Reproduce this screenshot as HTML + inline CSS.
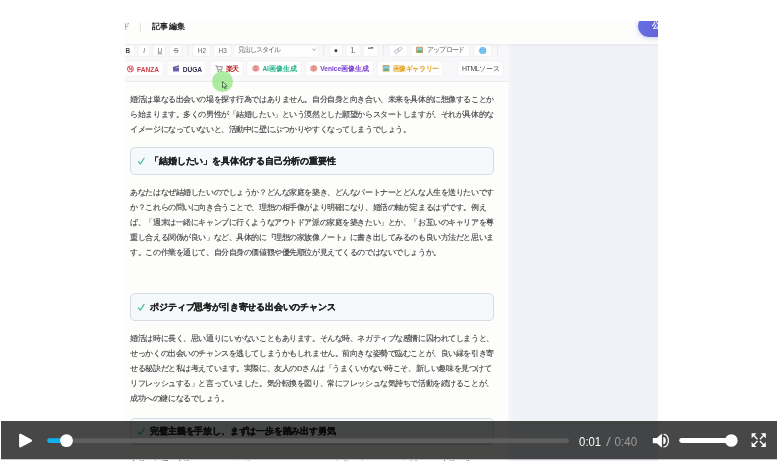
<!DOCTYPE html>
<html lang="ja">
<head>
<meta charset="utf-8">
<title>記事編集</title>
<style>
html,body{margin:0;padding:0;}
body{width:777px;height:461px;overflow:hidden;background:#fff;position:relative;font-family:"Liberation Sans",sans-serif;}
.abs{position:absolute;}
#frame{position:absolute;left:125.2px;top:20.8px;width:532.8px;height:440.2px;overflow:hidden;background:#fdfdfc;filter:blur(0.45px);}
/* coordinates inside frame are page coords minus (125,20.5) via wrapper */
#fw{position:absolute;left:-125.2px;top:-20.8px;width:777px;height:461px;}
#hdr{left:125px;top:20.5px;width:533px;height:23.2px;background:#fdfdfc;box-shadow:0 1px 3px rgba(0,0,0,0.06);z-index:3;}
#gray{left:507.5px;top:43.5px;width:151px;height:418px;background:linear-gradient(90deg,#f7f7fa 0,#f1f2f7 5px);}
#tb{left:125px;top:43.5px;width:383px;height:37.5px;background:#f8f8fa;border-bottom:1px solid #ececf0;}
.hbox{position:absolute;left:130.3px;width:363.7px;height:27.2px;box-sizing:border-box;border:1px solid #d6dce3;border-radius:5px;background:#f5f9fb;}
svg text{font-family:"Liberation Sans",sans-serif;dominant-baseline:central;}
.bb rect{fill:#fefefe;stroke:#ececf0;stroke-width:0.6;}
.sp rect{fill:#e9eaee;}
.t1 text{font-size:6.4px;fill:#666;}
.t2 text{font-size:6.6px;font-weight:bold;}
svg .tm text{font-size:13px;dominant-baseline:alphabetic;}
.bt text{font-size:7.58px;fill:#3c3c3c;stroke:#3c3c3c;stroke-width:0.1px;}
.ht text{font-size:8.83px;font-weight:bold;fill:#222;stroke:#222;stroke-width:0.22px;}
.ck path{fill:none;stroke:#3dbd9a;stroke-width:1.15;stroke-linecap:round;stroke-linejoin:round;}
</style>
</head>
<body>
<div id="frame"><div id="fw">
  <div class="abs" id="gray"></div>
  <div class="abs" id="tb"></div>
  <div class="abs" id="hdr"></div>
  <svg class="abs" style="left:0;top:0;z-index:4;" width="777" height="461" viewBox="0 0 777 461">
    <text x="122" y="26.5" textLength="7.8" style="font-size:7.8px;fill:#777;">ド</text>
    <rect x="139.8" y="23.2" width="1" height="8.2" fill="#dcdcdc"/>
    <text x="151.7" y="26.4" textLength="33.3" style="font-size:8.3px;font-weight:bold;fill:#222;">記事編集</text>
  </svg>
  <div class="abs" style="left:638px;top:14.6px;width:44px;height:22.4px;border-radius:11.2px;background:linear-gradient(120deg,#6173e6 0%,#6a56c6 100%);z-index:4;box-shadow:0 1px 5px rgba(100,100,220,0.35);"></div>
  <svg class="abs" style="left:0;top:0;z-index:5;" width="777" height="461" viewBox="0 0 777 461"><text x="652.3" y="25.9" textLength="7.6" style="font-size:7.6px;font-weight:bold;fill:#fff;">公</text></svg>

  <!-- toolbar -->
  <svg class="abs" style="left:0;top:0;" width="777" height="461" viewBox="0 0 777 461">
   <g class="bb">
    <rect x="120" y="44.5" width="14.8" height="12" rx="2.5"/>
    <rect x="138" y="44.5" width="12.2" height="12" rx="2.5"/>
    <rect x="152.8" y="44.5" width="12.9" height="12" rx="2.5"/>
    <rect x="169.5" y="44.5" width="12.3" height="12" rx="2.5"/>
    <rect x="192.7" y="44.5" width="18.0" height="12" rx="2.5"/>
    <rect x="213.8" y="44.5" width="17.5" height="12" rx="2.5"/>
    <rect x="329.6" y="44.5" width="13.0" height="12" rx="2.5"/>
    <rect x="345.8" y="44.5" width="14.6" height="12" rx="2.5"/>
    <rect x="363.4" y="44.5" width="14.6" height="12" rx="2.5"/>
    <rect x="388.9" y="44.5" width="18.5" height="12" rx="2.5"/>
    <rect x="410.7" y="44.5" width="59.0" height="12" rx="2.5"/>
    <rect x="473.9" y="44.5" width="17.8" height="12" rx="2.5"/>
    <rect x="234" y="44.5" width="84.4" height="12.8" rx="2.5"/>
    <rect x="118" y="61" width="45.4" height="15.2" rx="2.5"/>
    <rect x="167" y="61" width="39.0" height="15.2" rx="2.5"/>
    <rect x="210.1" y="61" width="33.0" height="15.2" rx="2.5"/>
    <rect x="246.9" y="61" width="54.4" height="15.2" rx="2.5"/>
    <rect x="305.3" y="61" width="68.2" height="15.2" rx="2.5"/>
    <rect x="376.9" y="61" width="66.1" height="15.2" rx="2.5"/>
    <rect x="457.7" y="61" width="45.6" height="15.2" rx="2.5"/>
   </g>
   <g class="sp">
    <rect x="187.1" y="45" width="1.2" height="10.5"/>
    <rect x="323.0" y="45" width="1.2" height="10.5"/>
    <rect x="382.9" y="45" width="1.2" height="10.5"/>
    <rect x="496.9" y="45" width="1.2" height="10.5"/>
   </g>
   <g class="t1">
    <text x="125.6" y="50.5" style="font-weight:bold;fill:#444;">B</text>
    <text x="143.3" y="50.5" style="font-style:italic;">I</text>
    <text x="157.6" y="50.5">U</text>
    <rect x="157.4" y="53.6" width="5" height="0.6" fill="#666"/>
    <text x="173.9" y="50.5">S</text>
    <rect x="173.2" y="50.2" width="5.6" height="0.6" fill="#666"/>
    <text x="197.8" y="50.5" textLength="8.2">H2</text>
    <text x="218.6" y="50.5" textLength="8.2">H3</text>
    <text x="238.2" y="49.9" textLength="42.6" style="font-size:6.7px;fill:#666;">見出しスタイル</text>
    <path d="M312.5 48.9 l1.6 1.5 l1.6 -1.5" fill="none" stroke="#777" stroke-width="0.75"/>
    <circle cx="335.9" cy="50.8" r="1.45" fill="#333"/>
    <text x="350.3" y="50.5" textLength="5.4" style="font-family:'Liberation Serif',serif;fill:#3a3a3a;font-size:7.6px;">1.</text>
    <text x="367.8" y="49.8" textLength="6" style="font-weight:bold;fill:#555;font-size:7px;">&#8220;&#8221;</text>
    <g fill="none" stroke="#b3b5c2" stroke-width="0.9" stroke-linecap="round"><rect x="394.4" y="49.9" width="4.6" height="2.7" rx="1.35" transform="rotate(-40 396.7 51.2)"/><rect x="397.4" y="47.9" width="4.6" height="2.7" rx="1.35" transform="rotate(-40 399.7 49.2)"/></g>
    <g><rect x="416" y="46.8" width="7" height="6.2" rx="0.6" fill="#c9a15a"/><rect x="416.8" y="47.6" width="5.4" height="4.6" fill="#8fc7e8"/><path d="M416.8 52.2 l1.9 -2.5 l1.3 1.4 l1 -1 l1.2 2.1 z" fill="#5aa85a"/></g>
    <text x="426.9" y="49.8" textLength="38.3" style="font-size:7px;fill:#606060;">アップロード</text>
    <g><circle cx="482.7" cy="50.4" r="3.5" fill="#4fb0e8"/><path d="M479.2 50.4 h7 M482.7 46.9 v7 M480.2 48.3 q2.5 1 5 0 M480.2 52.5 q2.5 -1 5 0" fill="none" stroke="#9ad4f5" stroke-width="0.5"/><ellipse cx="482.7" cy="50.4" rx="1.6" ry="3.5" fill="none" stroke="#9ad4f5" stroke-width="0.5"/></g>
   </g>
   <g class="t2">
    <g fill="none" stroke="#d8434d" stroke-width="0.9"><circle cx="130.4" cy="68.9" r="3"/><path d="M128.3 66.8 l4.2 4.2"/></g>
    <text x="130.4" y="69.1" text-anchor="middle" style="font-size:3.6px;fill:#d8434d;">18</text>
    <text x="137" y="69" textLength="22" fill="#d63b45">FANZA</text>
    <g><rect x="173" y="67.6" width="6" height="4" rx="0.5" fill="#6c5fb5"/><path d="M172.9 67 l5.9 -1.7 l0.4 1.3 l-5.9 1.7 z" fill="#4b4380"/><path d="M174.3 66.2 l0.8 1.2 M176.2 65.7 l0.8 1.2" stroke="#d8d4f0" stroke-width="0.5"/></g>
    <text x="182.8" y="69" textLength="19.3" fill="#2b2e4a">DUGA</text>
    <g fill="none" stroke="#8c8c8c" stroke-width="0.95" stroke-linejoin="round"><path d="M215.4 65.7 h1.3 l0.9 4 h4 l0.8 -3 h-5.4"/><circle cx="218.3" cy="71.2" r="0.5" fill="#9a9a9a"/><circle cx="221" cy="71.2" r="0.5" fill="#9a9a9a"/></g>
    <text x="225.8" y="68.9" textLength="13.2" fill="#b81c1c">楽天</text>
    <g><ellipse cx="255.8" cy="68.4" rx="3.3" ry="2.9" fill="#f0a9a4"/><path d="M255.8 65.6 v5.6 M253.8 67 q1 0.8 2 0 M257.8 67 q-1 0.8 -2 0 M253.60000000000002 69.3 q1.1 0.7 2.2 0 M258.0 69.3 q-1.1 0.7 -2.2 0" fill="none" stroke="#c96a6a" stroke-width="0.5"/><ellipse cx="255.8" cy="68.4" rx="3.3" ry="2.9" fill="none" stroke="#d98080" stroke-width="0.5"/></g>
    <text x="262.4" y="68.9" textLength="34.4" fill="#22b487">AI画像生成</text>
    <g><ellipse cx="313.7" cy="68.4" rx="3.3" ry="2.9" fill="#f0a9a4"/><path d="M313.7 65.6 v5.6 M311.7 67 q1 0.8 2 0 M315.7 67 q-1 0.8 -2 0 M311.5 69.3 q1.1 0.7 2.2 0 M315.9 69.3 q-1.1 0.7 -2.2 0" fill="none" stroke="#c96a6a" stroke-width="0.5"/><ellipse cx="313.7" cy="68.4" rx="3.3" ry="2.9" fill="none" stroke="#d98080" stroke-width="0.5"/></g>
    <text x="320.3" y="68.9" textLength="48.6" fill="#7a3fd2">Venice画像生成</text>
    <g><rect x="382.7" y="65.1" width="6.8" height="6.4" rx="0.6" fill="#c9a15a"/><rect x="383.5" y="65.9" width="5.2" height="4.8" fill="#8fc7e8"/><path d="M383.5 70.7 l1.8 -2.6 l1.3 1.4 l1 -1 l1.1 2.2 z" fill="#5aa85a"/></g>
    <text x="392.8" y="68.9" textLength="46.3" fill="#e3a321">画像ギャラリー</text>
    <text x="462" y="68.7" textLength="37.5" style="font-weight:normal;fill:#444;font-size:6.9px;">HTMLソース</text>
   </g>
  </svg>

  <!-- cursor highlight -->
  <div class="abs" style="left:212px;top:71.1px;width:21.2px;height:21.2px;border-radius:50%;background:rgba(140,230,125,0.72);z-index:6;"></div>
  <svg class="abs" style="left:222px;top:81px;z-index:7;" width="6" height="8.5" viewBox="0 0 12 17"><path d="M1 1 L1 13.5 L4 10.8 L6.3 16 L8.3 15 L6 10.2 L10.3 10.2 Z" fill="rgba(255,255,255,0.35)" stroke="#3c5c3c" stroke-width="1.6" stroke-linejoin="round"/></svg>

  <!-- body text -->
  <div class="hbox" style="top:147.4px;"></div>
  <div class="hbox" style="top:293.4px;"></div>
  <div class="hbox" style="top:417.9px;"></div>
  <svg class="abs" style="left:0;top:0;" width="777" height="461" viewBox="0 0 777 461">
   <g class="bt">
    <text x="130.3" y="99.2" textLength="363.8">婚活は単なる出会いの場を探す行為ではありません。自分自身と向き合い、未来を具体的に想像することか</text>
    <text x="130.3" y="114.2" textLength="363.8">ら始まります。多くの男性が「結婚したい」という漠然とした願望からスタートしますが、それが具体的な</text>
    <text x="130.3" y="129.3" textLength="280.5">イメージになっていないと、活動中に壁にぶつかりやすくなってしまうでしょう。</text>
    <text x="130.3" y="192.6" textLength="363.8">あなたはなぜ結婚したいのでしょうか？どんな家庭を築き、どんなパートナーとどんな人生を送りたいです</text>
    <text x="130.3" y="207.7" textLength="356.3">か？これらの問いに向き合うことで、理想の相手像がより明確になり、婚活の軸が定まるはずです。例え</text>
    <text x="130.3" y="222.7" textLength="363.8">ば、「週末は一緒にキャンプに行くようなアウトドア派の家庭を築きたい」とか、「お互いのキャリアを尊</text>
    <text x="130.3" y="237.8" textLength="363.8">重し合える関係が良い」など、具体的に『理想の家族像ノート』に書き出してみるのも良い方法だと思いま</text>
    <text x="130.3" y="252.8" textLength="310.8">す。この作業を通じて、自分自身の価値観や優先順位が見えてくるのではないでしょうか。</text>
    <text x="130.3" y="338.7" textLength="363.8">婚活は時に長く、思い通りにいかないこともあります。そんな時、ネガティブな感情に囚われてしまうと、</text>
    <text x="130.3" y="353.8" textLength="363.8">せっかくの出会いのチャンスを逃してしまうかもしれません。前向きな姿勢で臨むことが、良い縁を引き寄</text>
    <text x="130.3" y="368.8" textLength="361.5">せる秘訣だと私は考えています。実際に、友人のDさんは「うまくいかない時こそ、新しい趣味を見つけて</text>
    <text x="130.3" y="383.9" textLength="363.8">リフレッシュする」と言っていました。気分転換を図り、常にフレッシュな気持ちで活動を続けることが、</text>
    <text x="130.3" y="398.9" textLength="98.5">成功への鍵になるでしょう。</text>
    <text x="130.3" y="464.2" textLength="356.3">完璧な相手、完璧なタイミングを待っていては、いつまでも行動に移せません。婚活では、完璧を求めす</text>
   </g>
   <g class="ht">
    <text x="150.3" y="160.7" textLength="185.4">「結婚したい」を具体化する自己分析の重要性</text>
    <text x="150.3" y="306.9" textLength="185.4">ポジティブ思考が引き寄せる出会いのチャンス</text>
    <text x="150.3" y="431.3" textLength="185.4">完璧主義を手放し、まずは一歩を踏み出す勇気</text>
   </g>
   <g class="ck">
    <path d="M138.4 161.6 l2 2.3 l3.7 -5.7"/>
    <path d="M138.4 307.8 l2 2.3 l3.7 -5.7"/>
    <path d="M138.4 432.2 l2 2.3 l3.7 -5.7"/>
   </g>
  </svg>
</div></div>

<!-- player controls -->
<div class="abs" id="ctl" style="left:1px;top:421px;width:776px;height:38px;background:rgba(0,0,0,0.72);box-shadow:0 1px 0 rgba(0,0,0,0.22);"></div>
<svg class="abs" style="left:0;top:421px;opacity:0.999;" width="777" height="39" viewBox="0 421 777 39">
  <!-- play -->
  <path d="M20.3 434.9 L30.8 440.6 L20.3 446.3 Z" fill="#fff" stroke="#fff" stroke-width="2.4" stroke-linejoin="round"/>
  <!-- progress -->
  <rect x="47.2" y="438.2" width="521.8" height="4.8" rx="2.4" fill="#5e5e5e"/>
  <rect x="47.2" y="438.2" width="20" height="4.8" rx="2.4" fill="#0db1ef"/>
  <circle cx="66.5" cy="440.6" r="6.4" fill="#fff"/>
  <!-- volume icon -->
  <path d="M653.4 438 h3.4 l4.5 -4 q0.6 -0.4 0.6 0.4 v12.4 q0 0.8 -0.6 0.4 l-4.5 -4 h-3.4 q-0.6 0 -0.6 -0.6 v-4 q0 -0.6 0.6 -0.6 z" fill="#fff"/>
  <path d="M663.3 437 A2.5 3.6 0 0 1 663.3 444.2 z" fill="#fff"/>
  <path d="M664 434.3 A4.4 6.3 0 0 1 664 446.9" fill="none" stroke="#fff" stroke-width="1.25" stroke-linecap="round"/>
  <!-- volume slider -->
  <rect x="679.2" y="438.1" width="54" height="4.8" rx="2.4" fill="#fff"/>
  <circle cx="731.3" cy="440.5" r="6.3" fill="#fff"/>
  <!-- fullscreen -->
  <g fill="#fff" stroke="none">
    <path d="M751.6 433.3 h4.9 l-4.9 4.9 z"/>
    <path d="M765.8 433.3 v4.9 l-4.9 -4.9 z"/>
    <path d="M751.6 446.9 v-4.9 l4.9 4.9 z"/>
    <path d="M765.8 446.9 h-4.9 l4.9 -4.9 z"/>
    <path d="M753.3 435 L757.5 439.2 M764.1 435 L759.9 439.2 M753.3 445.2 L757.5 441 M764.1 445.2 L759.9 441" stroke="#fff" stroke-width="1.35" fill="none"/>
  </g>
  <g class="tm">
    <text x="579.1" y="446.1" textLength="22" lengthAdjust="spacingAndGlyphs" fill="#fff">0:01</text>
    <text x="605.9" y="446.1" textLength="4.8" lengthAdjust="spacingAndGlyphs" fill="#9b9b9b">/</text>
    <text x="614.5" y="446.1" textLength="22.6" lengthAdjust="spacingAndGlyphs" fill="#9b9b9b">0:40</text>
  </g>
</svg>
</body>
</html>
